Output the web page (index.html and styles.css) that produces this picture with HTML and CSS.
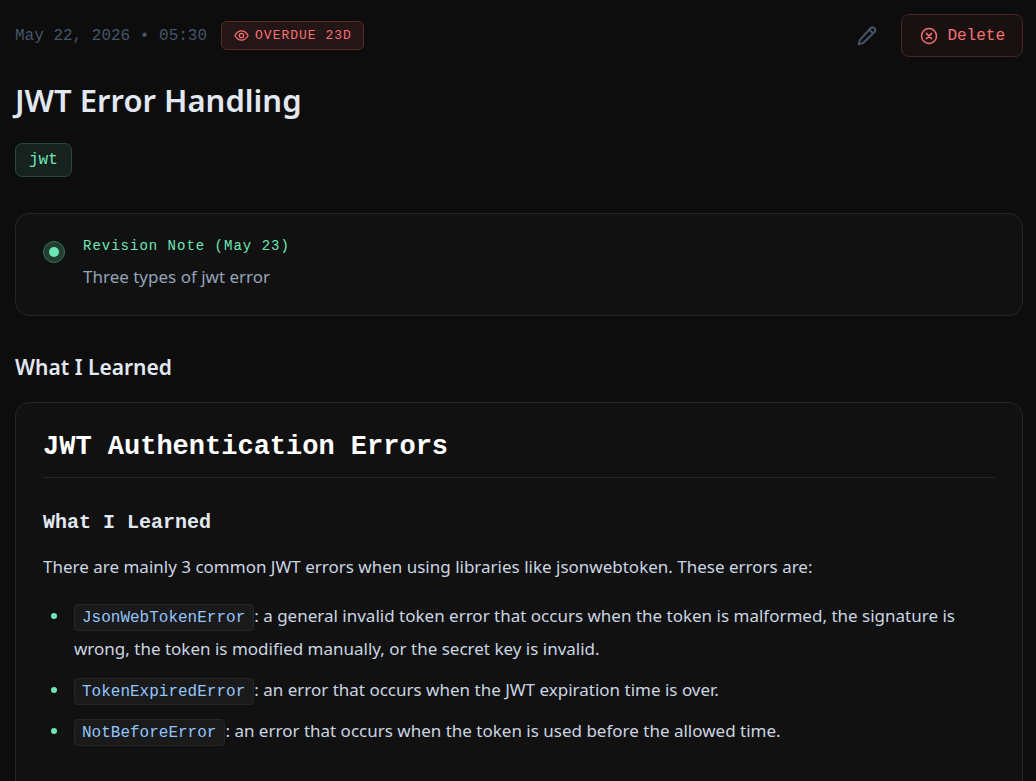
FILE: index.html
```html
<!DOCTYPE html>
<html lang="en">
<head>
<meta charset="utf-8">
<title>JWT Error Handling</title>
<link rel="stylesheet" href="styles.css">
</head>
<body>
<main class="entry">
  <header class="topbar">
    <div class="meta">
      <time class="date" datetime="2026-05-22T05:30">May 22, 2026 • 05:30</time>
      <span class="overdue">
        <svg class="icon-eye" viewBox="0 0 24 24" aria-hidden="true"><path d="M1.500 12s4-7.500 10.500-7.500S22.500 12 22.500 12s-4 7.500-10.500 7.500S1.500 12 1.500 12Z"/><circle cx="12" cy="12" r="3.500"/></svg>
        <span>OVERDUE 23D</span>
      </span>
    </div>
    <div class="actions">
      <button class="edit" type="button" aria-label="Edit">
        <svg class="icon-edit" viewBox="0 0 20 20" aria-hidden="true"><path d="M13.500 2.300a2.700 2.700 0 0 1 3.900 3.800L7 16.300c-.6.600-1.100.900-1.800 1.100L1.700 18.300l.9-3.500c.2-.7.500-1.200 1-1.700ZM13.200 2.800c-.3 2.400 1.300 4 3.700 3.700"/></svg>
      </button>
      <button class="delete" type="button">
        <svg class="icon-delete" viewBox="0 0 24 24" aria-hidden="true"><path d="m8.500 8.500 7 7m0-7-7 7"/><circle cx="12" cy="12" r="10"/></svg>
        <span>Delete</span>
      </button>
    </div>
  </header>

  <h1 class="title">JWT Error Handling</h1>
  <div class="tags"><span class="tag">jwt</span></div>

  <section class="card note">
    <span class="note-marker"></span>
    <div class="note-body">
      <h2 class="note-label">Revision Note (May 23)</h2>
      <p class="note-text">Three types of jwt error</p>
    </div>
  </section>

  <h2 class="section-title">What I Learned</h2>
  <article class="card content">
    <h1 class="content-title">JWT Authentication Errors</h1>
    <h2 class="content-subtitle">What I Learned</h2>
    <p class="content-text">There are mainly 3 common JWT errors when using libraries like jsonwebtoken. These errors are:</p>
    <ul class="errors">
      <li class="error"><code class="code">JsonWebTokenError</code>: a general invalid token error that occurs when the token is malformed, the signature is wrong, the token is modified manually, or the secret key is invalid.</li>
      <li class="error"><code class="code">TokenExpiredError</code>: an error that occurs when the JWT expiration time is over.</li>
      <li class="error"><code class="code">NotBeforeError</code>: an error that occurs when the token is used before the allowed time.</li>
    </ul>
  </article>
</main>
</body>
</html>
```
FILE: styles.css
```css
:root {
  --mono: "Liberation Mono", monospace;
  --sans: "Noto Sans", sans-serif;
  --mint: #6ee7b7;
  --red: #f87171;
  --line: #262626;
}

* { box-sizing: border-box; }

body {
  margin: 0;
  background: #0d0d0d;
  color: #cbd5e1;
  font-family: var(--sans);
  overflow: hidden;
}

h1, h2, p, ul { margin: 0; padding: 0; }

.entry { padding: 14px 13px 0 15px; }

.topbar, .meta, .actions, .overdue, .delete, .edit {
  display: flex;
  align-items: center;
}
.topbar { justify-content: space-between; }
.meta { gap: 14px; }
.actions { gap: 16px; }

.date {
  font: 16px/24px var(--mono);
  color: #475569;
}

.overdue {
  height: 29px;
  padding: 0 11px 0 12px;
  gap: 6px;
  border: 1px solid #5a2a2b;
  border-radius: 6px;
  background: #241516;
  color: var(--red);
  font: 13px/20px var(--mono);
  letter-spacing: 1px;
}

svg { fill: none; stroke: currentColor; stroke-linecap: round; stroke-linejoin: round; flex: none; }
.icon-eye { width: 15px; height: 15px; stroke-width: 2; }
.icon-edit { width: 20px; height: 20px; stroke-width: 2; }
.icon-delete { width: 18px; height: 18px; stroke-width: 2; }

.edit {
  padding: 0 8px;
  border: 0;
  background: none;
  color: #475569;
}

.delete {
  height: 43px;
  padding: 0 17px 0 18px;
  gap: 9px;
  border: 1px solid #4a2526;
  border-radius: 8px;
  background: #191111;
  color: var(--red);
  font: 16px/24px var(--mono);
}

.title {
  margin-top: 20px;
  color: #e2e8f0;
  font-size: 31px;
  font-weight: 600;
  line-height: 46px;
}

.tags { display: flex; margin-top: 20px; }
.tag {
  height: 34px;
  padding: 0 13px;
  border: 1px solid #264a3b;
  border-radius: 7px;
  background: #17211d;
  color: var(--mint);
  font: 16px/32px var(--mono);
}

.card {
  border: 1px solid var(--line);
  border-radius: 14px;
  background: #111111;
}

.note {
  display: flex;
  gap: 18px;
  margin-top: 36px;
  padding: 21px 27px 22px;
}
.note-marker {
  display: grid;
  place-items: center;
  width: 22px;
  height: 22px;
  margin-top: 6px;
  border: 1px solid #367258;
  border-radius: 50%;
  background: #233d33;
}
.note-marker::after {
  content: "";
  width: 10px;
  height: 10px;
  border-radius: 50%;
  background: var(--mint);
}
.note-label {
  color: var(--mint);
  font: 14px/22px var(--mono);
  letter-spacing: 1px;
}
.note-text {
  margin-top: 4px;
  color: #94a3b8;
  font-size: 17px;
  line-height: 32px;
}

.section-title {
  margin-top: 35px;
  color: #e2e8f0;
  font-size: 21px;
  font-weight: 600;
  line-height: 32px;
}

.content {
  margin-top: 19px;
  padding: 24px 27px 60px;
}
.content-title {
  padding-bottom: 10px;
  border-bottom: 1px solid var(--line);
  color: #ffffff;
  font: 700 27px/40px var(--mono);
}
.content-subtitle {
  margin-top: 29px;
  color: #e2e8f0;
  font: 700 20px/32px var(--mono);
}
.content-text {
  margin-top: 11px;
  font-size: 17px;
  line-height: 33px;
}
.errors {
  margin-top: 16px;
  padding-left: 31px;
  list-style: none;
}
.error {
  position: relative;
  margin-bottom: 8px;
  font-size: 17px;
  line-height: 33px;
}
.error::before {
  content: "";
  position: absolute;
  left: -23px;
  top: 14px;
  width: 6px;
  height: 6px;
  border-radius: 50%;
  background: var(--mint);
}
.code {
  display: inline-block;
  padding: 4px 8px 3px 7px;
  border: 1px solid var(--line);
  border-radius: 4px;
  background: #1a1a1a;
  color: #93c5fd;
  font: 16px/18px var(--mono);
}
```
